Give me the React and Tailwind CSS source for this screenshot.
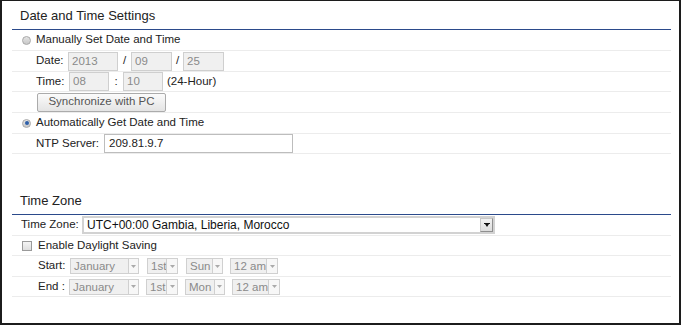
import React from "react";

const font = { fontFamily: '"Liberation Sans", Arial, sans-serif' };

function Box({ w, children, className = "" }) {
  return (
    <div
      className={`h-[19px] border border-[#cfcfcf] bg-[#f0f0f0] text-[#8a8a8a] text-[11.5px] leading-[17px] pl-[3px] ${className}`}
      style={{ width: w }}
    >
      {children}
    </div>
  );
}

function Sel({ w, aw, children, ml }) {
  return (
    <div
      className="h-[16px] flex border border-[#d0d0d0] bg-[#f0f0f0] text-[#8a8a8a] text-[11.5px] leading-[14px] overflow-hidden"
      style={{ width: w, marginLeft: ml }}
    >
      <div className="flex-1 pl-[3px] overflow-hidden whitespace-nowrap">{children}</div>
      <div
        className="h-full border-l border-[#d0d0d0] bg-[#f7f7f7] flex items-center justify-center"
        style={{ width: aw }}
      >
        <svg width="5" height="3" viewBox="0 0 5 3">
          <path d="M0 0h5L2.5 3z" fill="#aaa" />
        </svg>
      </div>
    </div>
  );
}

function Radio({ checked }) {
  return (
    <div className="w-[9px] h-[9px] rounded-full border border-[#a8a8a8] bg-gradient-to-b from-[#e4e4e4] to-[#c8c8c8] flex items-center justify-center">
      {checked && <div className="w-[4px] h-[4px] rounded-full bg-[#2d5fa8]" />}
    </div>
  );
}

export default function App() {
  return (
    <div
      className="w-[681px] h-[325px] bg-white border-l-2 border-r-2 border-b-2 border-t border-[#1c1c1c] pl-[10px] pr-[8px] text-[#222]"
      style={font}
    >
      {/* Section 1 header */}
      <div className="h-[29px] border-b border-[#2b4a8b] flex items-center pl-[8px] text-[13px] pt-[1px]">
        Date and Time Settings
      </div>

      <div className="h-[21px] border-b border-[#ececec] flex items-center text-[11.5px]">
        <div className="ml-[10px]">
          <Radio />
        </div>
        <span className="ml-[5px]">Manually Set Date and Time</span>
      </div>

      <div className="h-[21px] border-b border-[#ececec] flex items-center text-[11.5px]">
        <span className="ml-[24px] w-[32px]">Date:</span>
        <Box w={50}>2013</Box>
        <span className="w-[13px] text-center">/</span>
        <Box w={41}>09</Box>
        <span className="w-[11px] text-center">/</span>
        <Box w={41}>25</Box>
      </div>

      <div className="h-[20px] border-b border-[#ececec] flex items-center text-[11.5px]">
        <span className="ml-[24px] w-[33px]">Time:</span>
        <Box w={40}>08</Box>
        <span className="w-[14px] text-center">:</span>
        <Box w={40}>10</Box>
        <span className="ml-[4px]">(24-Hour)</span>
      </div>

      <div className="h-[21px] border-b border-[#ececec] flex items-center text-[11.5px]">
        <div className="ml-[25px] w-[129px] h-[19px] border border-[#ababab] rounded-[2px] bg-gradient-to-b from-[#fbfbfb] to-[#e4e4e4] text-[#555] flex items-center justify-center">
          Synchronize with PC
        </div>
      </div>

      <div className="h-[21px] border-b border-[#ececec] flex items-center text-[11.5px]">
        <div className="ml-[10px]">
          <Radio checked />
        </div>
        <span className="ml-[5px]">Automatically Get Date and Time</span>
      </div>

      <div className="h-[20px] border-b border-[#ececec] flex items-center text-[11.5px]">
        <span className="ml-[24px] w-[68px]">NTP Server:</span>
        <div className="w-[189px] h-[19px] border border-[#bdbdbd] bg-white pl-[4px] leading-[17px] text-[#222]">
          209.81.9.7
        </div>
      </div>

      <div className="h-[32px]" />

      {/* Section 2 header */}
      <div className="h-[29px] border-b border-[#2b4a8b] flex items-center pl-[8px] text-[13px] pt-[1px]">
        Time Zone
      </div>

      <div className="h-[21px] border-b border-[#ececec] flex items-center text-[11.5px]">
        <span className="ml-[9px] w-[61px]">Time Zone:</span>
        <div className="w-[413px] h-[18px] border-2 border-[#d2d2d2] bg-white flex">
          <div className="flex-1 pl-[3px] leading-[14px] text-[12px] text-[#111]">
            UTC+00:00 Gambia, Liberia, Morocco
          </div>
          <div className="w-[13px] h-full border border-[#8f8f8f] border-t-[#c8c8c8] border-l-[#c8c8c8] bg-gradient-to-b from-[#f2f2f2] to-[#dcdcdc] flex items-center justify-center">
            <svg width="6" height="4" viewBox="0 0 6 4">
              <path d="M0 0h6v1H0z M1 1h4L3 4z" fill="#111" />
            </svg>
          </div>
        </div>
      </div>

      <div className="h-[20px] border-b border-[#ececec] flex items-center text-[11.5px]">
        <div className="ml-[10px] w-[10px] h-[10px] border border-[#9a9a9a] bg-gradient-to-b from-[#f4f4f4] to-[#dedede]" />
        <span className="ml-[6px]">Enable Daylight Saving</span>
      </div>

      <div className="h-[21px] border-b border-[#ececec] flex items-center text-[11.5px]">
        <span className="ml-[26px] w-[32px]">Start:</span>
        <Sel w={69} aw={10}>January</Sel>
        <Sel w={31} aw={11} ml={8}>1st</Sel>
        <Sel w={37} aw={10} ml={8}>Sun</Sel>
        <Sel w={48} aw={11} ml={7}>12 am</Sel>
      </div>

      <div className="h-[20px] border-b border-[#ececec] flex items-center text-[11.5px]">
        <span className="ml-[26px] w-[31px]">End :</span>
        <Sel w={70} aw={10}>January</Sel>
        <Sel w={32} aw={11} ml={7}>1st</Sel>
        <Sel w={40} aw={10} ml={7}>Mon</Sel>
        <Sel w={48} aw={11} ml={7}>12 am</Sel>
      </div>
    </div>
  );
}
